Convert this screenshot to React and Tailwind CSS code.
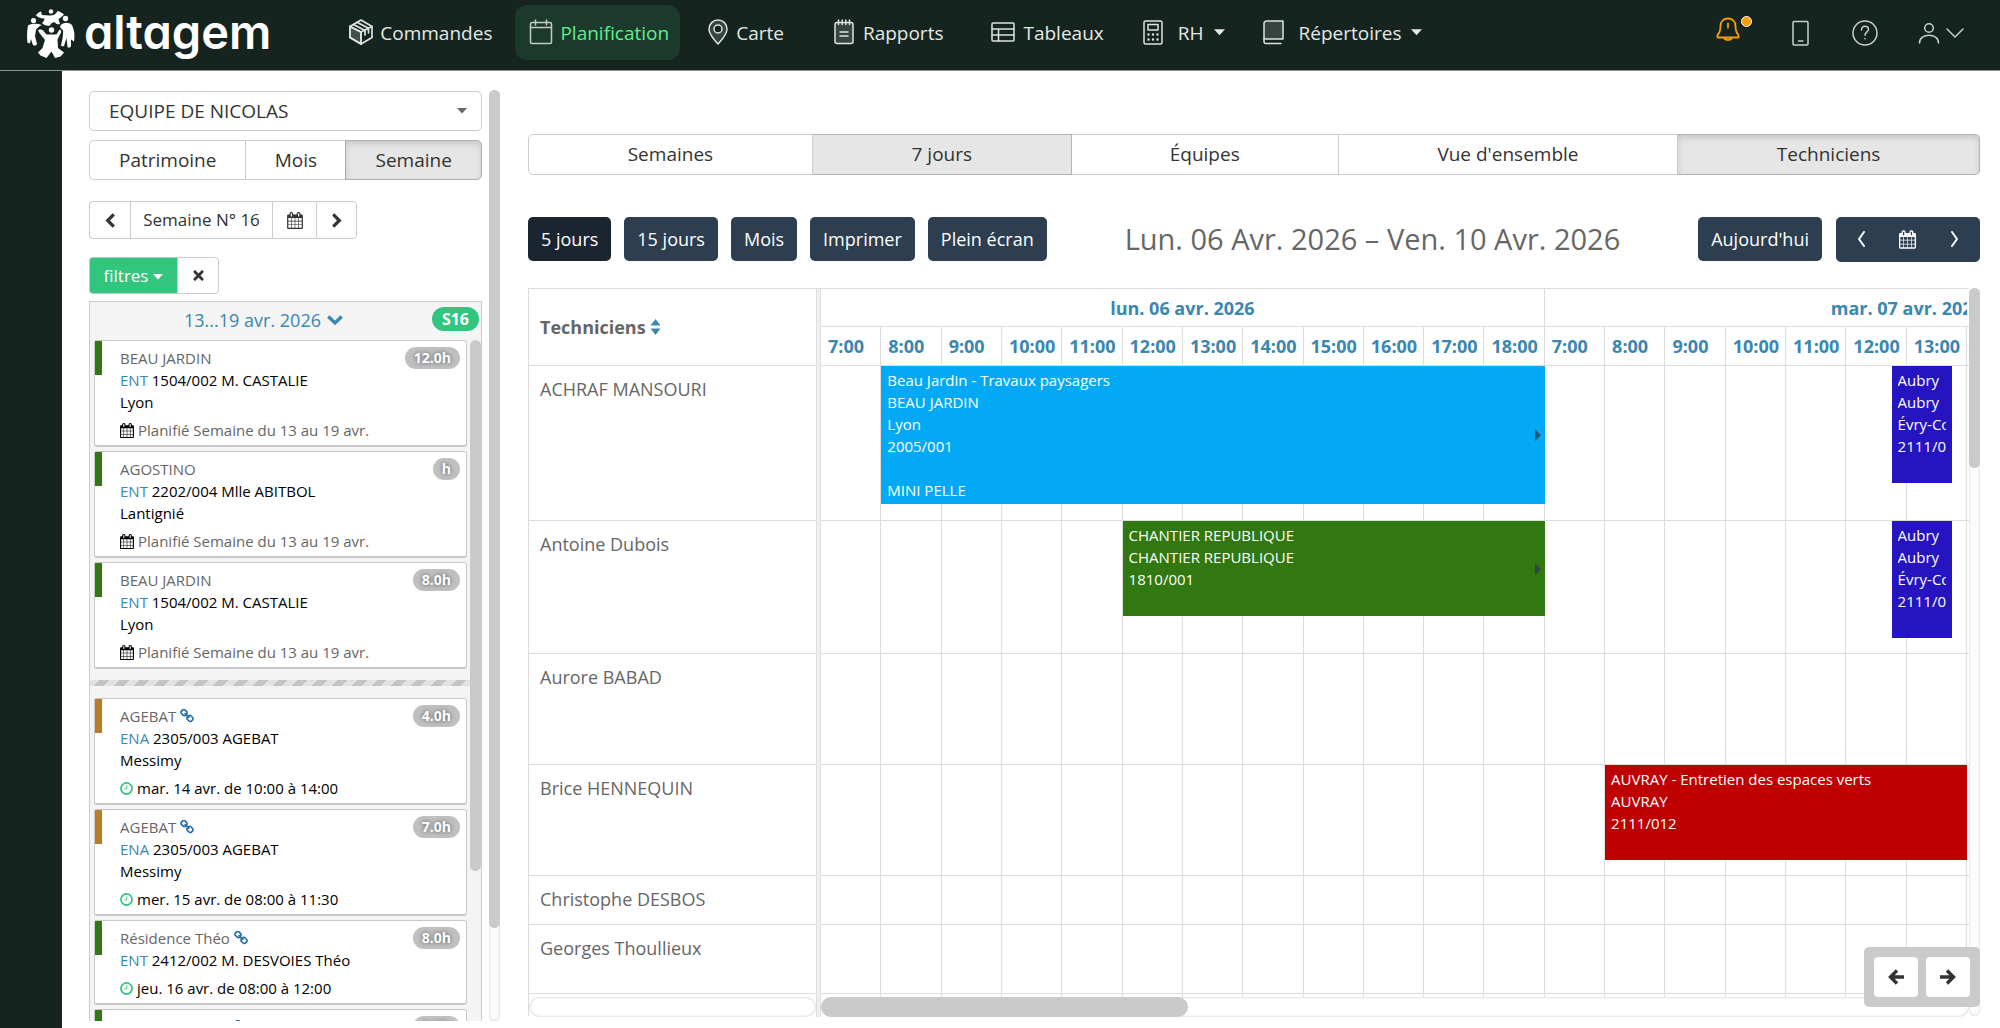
import React from "react";
import { FaTimes } from "react-icons/fa";

/* ---------- icons ---------- */

function Svg({ className, children, box = "0 0 24 24", sw = 1.5 }) {
  return (
    <svg viewBox={box} className={className} fill="none" stroke="currentColor" strokeWidth={sw} strokeLinecap="round" strokeLinejoin="round" aria-hidden="true">
      {children}
    </svg>
  );
}

const CalendarIcon = ({ className }) => (
  <svg viewBox="64 0 1664 1792" className={className} fill="currentColor" aria-hidden="true">
    <path d="M192 1664h288v-288h-288v288zm352 0h320v-288h-320v288zm-352-352h288v-320h-288v320zm352 0h320v-320h-320v320zm-352-384h288v-288h-288v288zm736 736h320v-288h-320v288zm-384-736h320v-288h-320v288zm768 736h288v-288h-288v288zm-384-352h320v-320h-320v320zm-352-864v-288q0-13-9.500-22.500t-22.500-9.500h-64q-13 0-22.500 9.500t-9.500 22.500v288q0 13 9.500 22.500t22.500 9.500h64q13 0 22.500-9.500t9.500-22.500zm736 864h288v-320h-288v320zm-384-384h320v-288h-320v288zm384 0h288v-288h-288v288zm32-480v-288q0-13-9.500-22.500t-22.500-9.500h-64q-13 0-22.500 9.500t-9.500 22.500v288q0 13 9.500 22.500t22.500 9.500h64q13 0 22.500-9.500t9.500-22.500zm384-64v1280q0 52-38 90t-90 38h-1408q-52 0-90-38t-38-90v-1280q0-52 38-90t90-38h128v-96q0-66 47-113t113-47h64q66 0 113 47t47 113v96h384v-96q0-66 47-113t113-47h64q66 0 113 47t47 113v96h128q52 0 90 38t38 90z" />
  </svg>
);

const LinkIcon = ({ className }) => (
  <svg viewBox="64 64 1664 1664" className={className} fill="currentColor" aria-hidden="true">
    <path d="M1520 1216q0-40-28-68l-208-208q-28-28-68-28-42 0-72 32 3 3 19 18.500t21.500 21.500 15 19 13 25.500 3.500 27.500q0 40-28 68t-68 28q-15 0-27.500-3.500t-25.500-13-19-15-21.500-21.500-18.500-19q-33 31-33 73 0 40 28 68l206 207q27 27 68 27 40 0 68-26l147-146q28-28 28-67zm-703-705q0-40-28-68l-206-207q-28-28-68-28-39 0-68 27l-147 146q-28 28-28 67 0 40 28 68l208 208q27 27 68 27 42 0 72-31-3-3-19-18.500t-21.500-21.500-15-19-13-25.500-3.500-27.500q0-40 28-68t68-28q15 0 27.500 3.500t25.500 13 19 15 21.500 21.500 18.500 19q33-31 33-73zm895 705q0 120-85 203l-147 146q-83 83-203 83-121 0-204-85l-206-207q-83-83-83-203 0-123 88-209l-88-88q-86 88-208 88-120 0-204-84l-208-208q-84-84-84-204t85-203l147-146q83-83 203-83 121 0 204 85l206 207q83 83 83 203 0 123-88 209l88 88q86-88 208-88 120 0 204 84l208 208q84 84 84 204z" />
  </svg>
);

const ClockIcon = ({ className }) => (
  <Svg className={className} box="0 0 14 14" sw={1.8}>
    <circle cx="7" cy="7" r="6" />
    <path d="M7.300 4v3.500H5" strokeWidth="1" />
  </Svg>
);

const Caret = ({ className }) => (
  <svg viewBox="0 0 10 6" className={className} fill="currentColor" aria-hidden="true">
    <path d="M0 0h10L5 5.500z" />
  </svg>
);

/* Heavy, square-ended chevrons and arrows */
function Bold({ className, d }) {
  return (
    <svg viewBox="0 0 16 16" className={className} fill="none" stroke="currentColor" strokeWidth="3.400" aria-hidden="true">
      <path d={d} />
    </svg>
  );
}
const ChevronLeft = ({ className }) => <Bold className={className} d="M11.500 1.500L5 8l6.500 6.500" />;
const ChevronRight = ({ className }) => <Bold className={className} d="M4.500 1.500L11 8l-6.500 6.500" />;
const ChevronDown = ({ className }) => <Bold className={className} d="M1.300 4.500L8 11l6.700-6.500" />;
const ArrowLeft = ({ className }) => <Bold className={className} d="M9 1.500L2.500 8 9 14.500M3 8h13" />;
const ArrowRight = ({ className }) => <Bold className={className} d="M7 1.500L13.500 8 7 14.500M13 8H0" />;

const BoxIcon = () => (
  <Svg className="h-[26px] w-6" box="0 0 24 26" sw={1.7}>
    <path d="M1 7.500v11l11 6.500v-12z" fill="#fff" fillOpacity=".2" />
    <path d="M12 1l11 6.500v11L12 25 1 18.500v-11z" />
    <path d="M1 7.500L12 13l11-5.500M12 13v12M4.500 5.500L16 11.500v4.500M8 3.300l11.500 6v4.500" />
  </Svg>
);
const NavCalendarIcon = () => (
  <Svg className="h-[26px] w-6 text-[#c3cbc7]" box="0 0 24 26">
    <rect x="1.500" y="3.500" width="21" height="21" rx="1.500" />
    <path d="M1.500 8.500h21M6.500 1v5M17.500 1v5" />
  </Svg>
);
const PinIcon = () => (
  <Svg className="h-[26px] w-5" box="0 0 20 26">
    <path d="M10 1a9 9 0 0 0-9 9c0 6 6 11.500 9 15 3-3.500 9-9 9-15a9 9 0 0 0-9-9z" fill="#fff" fillOpacity=".15" />
    <circle cx="10" cy="10" r="4" fill="#16241f" />
  </Svg>
);
const NotepadIcon = () => (
  <Svg className="h-[26px] w-5" box="0 0 20 26">
    <rect x="1" y="3.500" width="18" height="21" rx="2" fill="#fff" fillOpacity=".15" />
    <path d="M4.500 1v4.500M8.200 1v4.500M11.800 1v4.500M15.500 1v4.500M6 13h8M6 17h8" />
  </Svg>
);
const TableIcon = () => (
  <Svg className="h-[26px] w-6" box="0 0 24 26">
    <rect x="1" y="4" width="22" height="18" rx="1" />
    <path d="M1 10h22M1 16h22M7.500 10v12" />
  </Svg>
);
const CalculatorIcon = () => (
  <Svg className="h-[26px] w-5" box="0 0 20 26">
    <rect x="1" y="2" width="18" height="23" rx="1.500" />
    <rect x="5" y="5.500" width="10" height="5.500" />
    <path d="M5.500 15.500h.01M10 15.500h.01M14.500 15.500h.01M5.500 20.500h.01M10 20.500h.01M14.500 20.500h.01" strokeWidth="2.400" />
  </Svg>
);
const BookIcon = () => (
  <Svg className="h-[26px] w-[21px]" box="0 0 21 26">
    <path d="M3.500 2H20v18H1V4.500A2.500 2.500 0 0 1 3.500 2z" fill="#fff" fillOpacity=".15" />
    <path d="M1 20v2.500A2 2 0 0 0 3 24.500h15" />
  </Svg>
);

const Logo = () => (
  <a href="#accueil" className="flex items-center gap-[9px] text-white" aria-label="altagem">
    <svg viewBox="0 0 48 50" className="h-[50px] w-12" fill="currentColor" aria-hidden="true">
      <circle cx="24" cy="3.500" r="2.200" />
      <circle cx="6.500" cy="12.500" r="2.600" />
      <circle cx="38.500" cy="10.500" r="2.700" />
      <circle cx="24.500" cy="22" r="2.700" />
      <path d="M9 7.500c1-2 3-3.500 5-4l1 3.500 7 .5c4 .3 7-1 8.500-4.500 2.500.5 5 2 6.500 3.500-2 2.500-4 3.500-5.500 4.500l1.500 5c-2 .8-4 0-5.500-2-2 .5-3.500 1-4.500 3.500-3 .8-6.500-.5-8-2.500 2-2 2.500-3 2.500-4.500-3 .3-6-.8-8.500-3z" />
      <path d="M1 17.500c3-2 8-2.500 14-.5-3 1.500-5 2.500-6 5l-1 6 2 8c-1.500 2.500-3.500 2-4.500 0l-1.500-5-1 4c-1 .5-2 .2-2.500-.5-.8-6-.5-12 .5-17z" />
      <path d="M33 18c3-3.500 8-4.500 12-1 2.500 5 3 11 2 16.500l-3-2v6.500c-1 2-2.500 2-3.500 1l-1-9-2.500 8c-1.500.5-2.500 0-3-.5 1.500-6 2.500-12 2-15.500-1.500-.5-2.500-2-3-4z" />
      <path d="M11 22c2-1 4-.5 5 .5l3.500 4h10l3-5c1.500.5 2 1.500 1.500 3l-3.500 7 .5 8.500 6 4.500-3.500 4-5.500 1.500-3.500-6.500-5 6.500-6-2.500-2.500-3 4.500-4.500 2.500-8-5.500-7z" />
    </svg>
    <span className="-mt-[2px] font-['Inter','Lato',sans-serif] text-[47px] leading-[50px] font-semibold [font-feature-settings:'cv11']">altagem</span>
  </a>
);

/* ---------- header ---------- */

const navItems = [
  { label: "Commandes", icon: <BoxIcon />, pad: "pl-[78px]", gap: "gap-[7px]" },
  { label: "Planification", icon: <NavCalendarIcon />, active: true, pad: "ml-[23px]", gap: "gap-[7px]" },
  { label: "Carte", icon: <PinIcon />, pad: "pl-[28px]", gap: "gap-2" },
  { label: "Rapports", icon: <NotepadIcon />, pad: "pl-[50px]", gap: "gap-[9px]" },
  { label: "Tableaux", icon: <TableIcon />, pad: "pl-[48px]", gap: "gap-2" },
  { label: "RH", icon: <CalculatorIcon />, caret: true, pad: "pl-[39px]", gap: "gap-[15px]" },
  { label: "Répertoires", icon: <BookIcon />, caret: true, pad: "pl-[38px]", gap: "gap-[15px]" },
];

function Header() {
  return (
    <header className="flex h-[71px] shrink-0 items-start border-b border-[#8a9490] bg-[#16241f] pr-9 pl-[27px] text-[#e4e8e6]">
      <div className="mt-2 flex">
        <Logo />
      </div>
      <nav className="flex pt-[5px] text-[19px]">
        {navItems.map((n) => (
          <div key={n.label} className={n.pad}>
            <a
              href={"#" + n.label}
              aria-current={n.active ? "page" : undefined}
              className={
                "flex h-[55px] items-center rounded-xl " + n.gap +
                (n.active ? " bg-[#1c3a2b] pr-[11px] pl-[14px] text-[#5cf08e]" : "")
              }
            >
              <span className="-mt-[2px] text-[#dde2e0]">{n.icon}</span>
              <span className="leading-[26px]">{n.label}</span>
              {n.caret && <Caret className="-ml-[5px] h-[7px] w-[11px]" />}
            </a>
          </div>
        ))}
      </nav>
      <div className="ml-auto flex h-[65px] items-center text-[#c9cecc]">
        <button type="button" aria-label="Notifications" className="relative -mt-[6px] mr-[52px] text-[#f59e0b]">
          <Svg className="h-[26px] w-6" box="0 0 24 26" sw={1.8}>
            <path d="M12 1.500c-4.500 0-7.500 3-7.500 7.500 0 5-1 7-3 9v2.500h21V18c-2-2-3-4-3-9 0-4.500-3-7.500-7.500-7.500z" />
            <path d="M8.500 21c.5 2.500 6.500 2.500 7 0M12 6.500v4" />
          </Svg>
          <span className="absolute -top-[1px] left-[25px] size-[11px] rounded-full border border-white bg-[#f59e0b]" />
        </button>
        <button type="button" aria-label="Mobile" className="mr-[42px]">
          <Svg className="h-[26px] w-[18px]" box="0 0 18 26">
            <rect x="1" y="1.500" width="15" height="23.500" rx="1.200" />
            <path d="M6.500 21h4.500" />
          </Svg>
        </button>
        <button type="button" aria-label="Aide" className="mr-[40px]">
          <Svg className="size-[26px]" box="0 0 26 26">
            <circle cx="13" cy="13" r="12" />
            <path d="M9.500 10c0-5 7-5 7-.7 0 2.500-3.500 2.700-3.500 6M13 18.600v.2" />
          </Svg>
        </button>
        <button type="button" aria-label="Compte" className="flex items-center gap-[6px]">
          <Svg className="h-[22px] w-[22px]" box="0 0 22 22">
            <circle cx="11" cy="6" r="4.300" />
            <path d="M1.500 21c0-10.500 19-10.500 19 0" />
          </Svg>
          <Svg className="h-[10px] w-[18px]" box="0 0 18 10">
            <path d="M1 1l8 8 8-8" />
          </Svg>
        </button>
      </div>
    </header>
  );
}

/* ---------- left panel ---------- */

const planned = "Planifié Semaine du 13 au 19 avr.";
const weekOrders = [
  { site: "BEAU JARDIN", code: "ENT", ref: "1504/002 M. CASTALIE", city: "Lyon", hours: "12.0h" },
  { site: "AGOSTINO", code: "ENT", ref: "2202/004 Mlle ABITBOL", city: "Lantignié", hours: "h" },
  { site: "BEAU JARDIN", code: "ENT", ref: "1504/002 M. CASTALIE", city: "Lyon", hours: "8.0h" },
];
const fixedOrders = [
  { site: "AGEBAT", code: "ENA", ref: "2305/003 AGEBAT", city: "Messimy", hours: "4.0h", when: "mar. 14 avr. de 10:00 à 14:00", tone: "bg-[#b97d28]" },
  { site: "AGEBAT", code: "ENA", ref: "2305/003 AGEBAT", city: "Messimy", hours: "7.0h", when: "mer. 15 avr. de 08:00 à 11:30", tone: "bg-[#b97d28]" },
  { site: "Résidence Théo", code: "ENT", ref: "2412/002 M. DESVOIES Théo", hours: "8.0h", when: "jeu. 16 avr. de 08:00 à 12:00" },
  { site: "Résidence Théo", code: "ENT", ref: "2412/002 M. DESVOIES Théo", hours: "8.0h", when: "ven. 17 avr. de 08:00 à 12:00" },
];

function OrderCard({ o }) {
  return (
    <article className="mb-1 flex shrink-0 rounded-[3px] border border-b-2 border-[#c8c8c8] bg-white text-[15px] leading-[22px] text-black">
      <div className={"h-[34px] w-[7px] shrink-0 " + (o.tone || "bg-[#30780f]")} />
      <div className="min-w-0 flex-1 pt-[6px] pr-[6px] pb-[4px] pl-[18px]">
        <div className="flex items-center">
          <span className="text-[#666]">{o.site}</span>
          {o.when && <LinkIcon className="ml-1 size-[14px] text-[#1f6ca6]" />}
          <span className="ml-auto rounded-full bg-[#c0c0c0] px-[9px] text-[14px] font-bold text-white [text-shadow:0_0_4px_#555]">{o.hours}</span>
        </div>
        <div>
          <a href="#commande" className="text-[#3a87b0]">{o.code}</a> {o.ref}
        </div>
        {o.city && <div>{o.city}</div>}
        <div className="mt-[6px] flex items-center gap-1">
          {o.when ? <ClockIcon className="size-[13px] text-[#32c57e]" /> : <CalendarIcon className="h-[15px] w-[14px]" />}
          <span className={o.when ? "" : "text-[#666]"}>{o.when || planned}</span>
        </div>
      </div>
    </article>
  );
}

const plainBtn = "flex items-center justify-center border border-[#ccc] bg-white text-[#333]";

function Sidebar() {
  return (
    <aside className="flex w-[438px] shrink-0 pt-5 pb-[7px] pl-[27px]">
      <div className="flex min-w-0 flex-1 flex-col">
        <div className="relative shrink-0">
          <select aria-label="Équipe" className="h-10 w-full appearance-none rounded-[5px] border border-[#ccc] bg-white pl-[19px] text-[19px] text-[#333]">
            <option>EQUIPE DE NICOLAS</option>
          </select>
          <Caret className="pointer-events-none absolute top-[17px] right-[15px] h-[6px] w-[10px] text-[#666]" />
        </div>
        <div className="mt-[9px] flex h-10 shrink-0 text-[19px]">
          <button type="button" className={plainBtn + " flex-[157] rounded-l-[5px] border-r-0"}>Patrimoine</button>
          <button type="button" className={plainBtn + " flex-[100] border-r-0"}>Mois</button>
          <button type="button" className="flex-[136] rounded-r-[5px] border border-[#adadad] bg-[#e6e6e6] text-[#333] shadow-[inset_0_3px_6px_rgba(0,0,0,0.13)]">Semaine</button>
        </div>
        <div className="mt-[21px] flex h-[38px] shrink-0 text-[17px]">
          <button type="button" aria-label="Semaine précédente" className={plainBtn + " w-[41px] rounded-l-[4px] border-r-0"}><ChevronLeft className="size-[15px]" /></button>
          <button type="button" className={plainBtn + " w-[142px] border-r-0"}>Semaine N° 16</button>
          <button type="button" aria-label="Choisir une date" className={plainBtn + " w-[44px] border-r-0"}><CalendarIcon className="h-[17px] w-4" /></button>
          <button type="button" aria-label="Semaine suivante" className={plainBtn + " w-[41px] rounded-r-[4px]"}><ChevronRight className="size-[15px]" /></button>
        </div>
        <div className="mt-[18px] flex h-[37px] shrink-0 text-[17px]">
          <button type="button" className="flex w-[88px] items-center justify-center gap-[5px] rounded-l-[4px] border border-r-0 border-[#b9cfc3] bg-[#32c57e] text-white">
            filtres <Caret className="mt-[3px] h-[6px] w-[10px]" />
          </button>
          <button type="button" aria-label="Effacer les filtres" className={plainBtn + " w-[42px] rounded-r-[4px]"}><FaTimes className="size-[15px]" /></button>
        </div>
        <section className="mt-[7px] flex min-h-0 flex-1 flex-col border border-b-0 border-[#ccc] bg-[#f4f4f4]">
          <div className="relative flex h-[38px] shrink-0 items-center justify-center pb-[3px]">
            <button type="button" className="mr-[44px] flex items-center gap-[6px] text-[18px] leading-6 text-[#3a87b0]">
              13...19 avr. 2026 <ChevronDown className="size-4" />
            </button>
            <span className="absolute top-[5px] right-[2px] rounded-full bg-[#32c57e] px-[10px] text-[16px] leading-[24px] font-bold text-white">S16</span>
          </div>
          <div className="flex min-h-0 flex-1">
            <div className="flex min-w-0 flex-1 flex-col overflow-hidden">
              <div className="flex shrink-0 flex-col pr-[3px] pl-1">
                {weekOrders.map((o, i) => <OrderCard key={i} o={o} />)}
              </div>
              <div className="mt-[7px] mb-[12px] h-[6px] shrink-0 bg-[repeating-linear-gradient(135deg,#e2e2e2_0,#e2e2e2_7px,#c4c4c4_7px,#c4c4c4_14px)]" />
              <div className="flex shrink-0 flex-col pr-[3px] pl-1">
                {fixedOrders.map((o, i) => <OrderCard key={i} o={o} />)}
              </div>
            </div>
            <div className="w-[11px] shrink-0 bg-[#f4f4f4]">
              <div className="h-[78%] rounded-full bg-[#cacaca]" />
            </div>
          </div>
        </section>
      </div>
      <div className="-mt-[1px] ml-[7px] w-[11px] shrink-0 rounded-full bg-[#fafafa] shadow-[inset_0_0_2px_rgba(0,0,0,0.25)]">
        <div className="h-[90%] rounded-full bg-[#cacaca]" />
      </div>
    </aside>
  );
}

/* ---------- planner ---------- */

const HOURS = [7, 8, 9, 10, 11, 12, 13, 14, 15, 16, 17, 18, 7, 8, 9, 10, 11, 12, 13];

const aubry = { pos: "col-start-[72] col-span-4", size: "h-[117px]", tone: "bg-[#2514c0]", lines: ["Aubry", "Aubry", "Évry-Courcouronnes", "2111/012"] };

const rows = [
  {
    name: "ACHRAF MANSOURI", h: "h-[154px]",
    events: [
      { pos: "col-start-5 col-span-44", size: "h-[138px]", tone: "bg-[#04a9f5]", more: true, lines: ["Beau Jardin - Travaux paysagers", "BEAU JARDIN", "Lyon", "2005/001", "\u00a0", "MINI PELLE"] },
      aubry,
    ],
  },
  {
    name: "Antoine Dubois", h: "h-[132px]",
    events: [
      { pos: "col-start-[21] col-span-28", size: "h-[95px]", tone: "bg-[#30780f]", more: true, lines: ["CHANTIER REPUBLIQUE", "CHANTIER REPUBLIQUE", "1810/001"] },
      aubry,
    ],
  },
  { name: "Aurore BABAD", h: "h-[110px]", events: [] },
  {
    name: "Brice HENNEQUIN", h: "h-[110px]",
    events: [{ pos: "col-start-[53] col-span-24", size: "h-[95px]", tone: "bg-[#bf0000]", lines: ["AUVRAY - Entretien des espaces verts", "AUVRAY", "2111/012"] }],
  },
  { name: "Christophe DESBOS", h: "h-[48px]", events: [] },
  { name: "Georges Thoullieux", h: "h-[68px]", events: [] },
];

/* One track per hour for the lines, one per quarter of an hour for the events */
function Track({ h, events = [] }) {
  return (
    <div className={"grid grid-cols-[minmax(0,1fr)] grid-rows-[100%] pr-[2px] " + h}>
      <div className="col-start-1 row-start-1 grid grid-cols-[repeat(19,minmax(0,1fr))]">
        {HOURS.map((_, i) => <div key={i} className="border-r border-[#ddd]" />)}
      </div>
      <div className="col-start-1 row-start-1 grid grid-cols-[repeat(76,minmax(0,1fr))]">
        {events.map((e, i) => <Event key={i} e={e} />)}
      </div>
    </div>
  );
}

function Event({ e }) {
  return (
    <div className={"relative row-start-1 self-start overflow-hidden px-[6px] pt-[3px] text-[15px] leading-[22px] whitespace-nowrap text-white " + e.pos + " " + e.size + " " + e.tone}>
      <div className="overflow-hidden">
        {e.lines.map((l, i) => <div key={i}>{l}</div>)}
      </div>
      {e.more && (
        <svg viewBox="0 0 6 12" className="absolute top-1/2 right-1 h-3 w-[6px] -translate-y-1/2" fill="#2c3e50" fillOpacity=".8" aria-hidden="true">
          <path d="M0 0l6 6-6 6z" />
        </svg>
      )}
    </div>
  );
}

const tabs = [
  { label: "Semaines", size: "flex-[284] rounded-l-[5px]" },
  { label: "7 jours", size: "flex-[259]", on: true },
  { label: "Équipes", size: "flex-[267]" },
  { label: "Vue d'ensemble", size: "flex-[340]" },
  { label: "Techniciens", size: "flex-[302] rounded-r-[5px] shadow-[inset_0_3px_6px_rgba(0,0,0,0.13)]", on: true },
];

const darkBtn = "h-11 rounded-[5px] bg-[#2c3e50] px-[13px] text-[18px] text-white";

function Planner() {
  return (
    <main className="relative flex min-w-0 flex-1 flex-col pt-[63px] pr-5 pb-3 pl-7">
      <div className="flex h-[41px] shrink-0 text-[19px] text-[#333]">
        {tabs.map((t) => (
          <button
            key={t.label}
            type="button"
            aria-pressed={!!t.on}
            className={"border border-l-0 first:border-l " + t.size + (t.on ? " border-[#b3b3b3] bg-[#e6e6e6]" : " border-[#ccc] bg-white")}
          >
            {t.label}
          </button>
        ))}
      </div>

      <div className="mt-[42px] flex h-11 shrink-0 items-center justify-between">
        <div className="flex gap-[13px]">
          <button type="button" className="h-11 rounded-[5px] bg-[#1a252f] px-[13px] text-[18px] text-white">5 jours</button>
          <button type="button" className={darkBtn}>15 jours</button>
          <button type="button" className={darkBtn}>Mois</button>
          <button type="button" className={darkBtn}>Imprimer</button>
          <button type="button" className={darkBtn}>Plein écran</button>
        </div>
        <h2 className="text-[29px] leading-9 text-[#666]">Lun. 06 Avr. 2026 – Ven. 10 Avr. 2026</h2>
        <div className="flex items-center gap-[14px]">
          <button type="button" className={darkBtn}>Aujourd'hui</button>
          <div className="flex h-[45px] w-[144px] items-center justify-between rounded-[5px] bg-[#2c3e50] px-[20px] text-white">
            <button type="button" aria-label="Précédent"><Svg className="h-4 w-[10px]" box="0 0 10 16" sw={2}><path d="M8 1L3 8l5 7" /></Svg></button>
            <button type="button" aria-label="Calendrier"><CalendarIcon className="h-[19px] w-[17px]" /></button>
            <button type="button" aria-label="Suivant"><Svg className="h-4 w-[10px]" box="0 0 10 16" sw={2}><path d="M2 1l5 7-5 7" /></Svg></button>
          </div>
        </div>
      </div>

      <div className="mt-[27px] flex min-h-0 flex-1">
        <div className="flex min-w-0 flex-1 flex-col border-l border-[#ddd]">
          <table className="w-full shrink-0 table-fixed border-separate border-spacing-0 border-t border-[#ddd]">
            <colgroup>
              <col className="w-[287px]" />
              <col className="w-[5px]" />
              <col />
            </colgroup>
            <thead>
              <tr>
                <th scope="col" className="border-b border-[#ddd] pl-[11px] text-left align-middle text-[18px] font-bold text-[#666]">
                  <span className="flex items-center gap-1">
                    Techniciens
                    <svg viewBox="0 0 10 16" className="h-4 w-[11px] text-[#3a87b0]" fill="currentColor" aria-hidden="true"><path d="M5 0l5 6.500H0zM5 16l5-6.500H0z" /></svg>
                  </span>
                </th>
                <td className="border-x border-[#ddd] bg-[#f0f0f0] p-0" />
                <th scope="col" className="border-b border-[#ddd] p-0 text-[18px] font-bold text-[#3a87b0]">
                  <div className="grid h-[38px] grid-cols-[repeat(19,minmax(0,1fr))] border-b border-[#ddd] pr-[2px] leading-[38px]">
                    <div className="col-span-12 border-r border-[#ddd]">lun. 06 avr. 2026</div>
                    <div className="col-span-7 overflow-hidden"><div className="w-[724px]">mar. 07 avr. 2026</div></div>
                  </div>
                  <div className="grid h-[38px] grid-cols-[repeat(19,minmax(0,1fr))] pr-[2px] text-left leading-[38px]">
                    {HOURS.map((h, i) => (
                      <div key={i} className="border-r border-[#ddd] pl-[7px]">{h}:00</div>
                    ))}
                  </div>
                </th>
              </tr>
            </thead>
            <tbody>
              {rows.map((r) => (
                <tr key={r.name}>
                  <th scope="row" className="border-b border-[#ddd] pt-[10px] pl-[11px] text-left align-top text-[18px] leading-[26px] font-normal text-[#666]">{r.name}</th>
                  <td className="border-x border-[#ddd] bg-[#f0f0f0] p-0" />
                  <td className="border-b border-[#ddd] p-0">
                    <Track h={r.h} events={r.events} />
                  </td>
                </tr>
              ))}
              <tr>
                <td className="p-0" />
                <td className="border-x border-[#ddd] bg-[#f0f0f0] p-0" />
                <td className="p-0"><Track h="h-[3px]" /></td>
              </tr>
            </tbody>
          </table>
          <div className="flex h-5 shrink-0">
            <div className="w-[287px] rounded-full shadow-[inset_0_0_3px_rgba(0,0,0,0.25)]" />
            <div className="w-[5px] border-x border-[#ddd] bg-[#f0f0f0]" />
            <div className="min-w-0 flex-1 rounded-full shadow-[inset_0_0_3px_rgba(0,0,0,0.25)]">
              <div className="h-5 w-[32%] rounded-full bg-[#cacaca]" />
            </div>
          </div>
        </div>
        <div className="w-[11px] shrink-0 rounded-full bg-[#fcfcfc] shadow-[inset_0_0_2px_rgba(0,0,0,0.25)]">
          <div className="h-[180px] rounded-full bg-[#cacaca]" />
        </div>
      </div>

      <div className="absolute right-5 bottom-[21px] flex gap-2 rounded-[5px] bg-[#cacaca] p-[10px] text-[#333]">
        <button type="button" aria-label="Défiler à gauche" className="flex h-10 w-[44px] items-center justify-center rounded-[4px] bg-white"><ArrowLeft className="size-4" /></button>
        <button type="button" aria-label="Défiler à droite" className="flex h-10 w-[44px] items-center justify-center rounded-[4px] bg-white"><ArrowRight className="size-4" /></button>
      </div>
    </main>
  );
}

export default function App() {
  return (
    <div className="flex h-screen flex-col overflow-hidden bg-white font-['Open_Sans','Noto_Sans',sans-serif]">
      <Header />
      <div className="flex min-h-0 flex-1">
        <div className="w-[62px] shrink-0 bg-[#16241f]" />
        <Sidebar />
        <Planner />
      </div>
    </div>
  );
}
